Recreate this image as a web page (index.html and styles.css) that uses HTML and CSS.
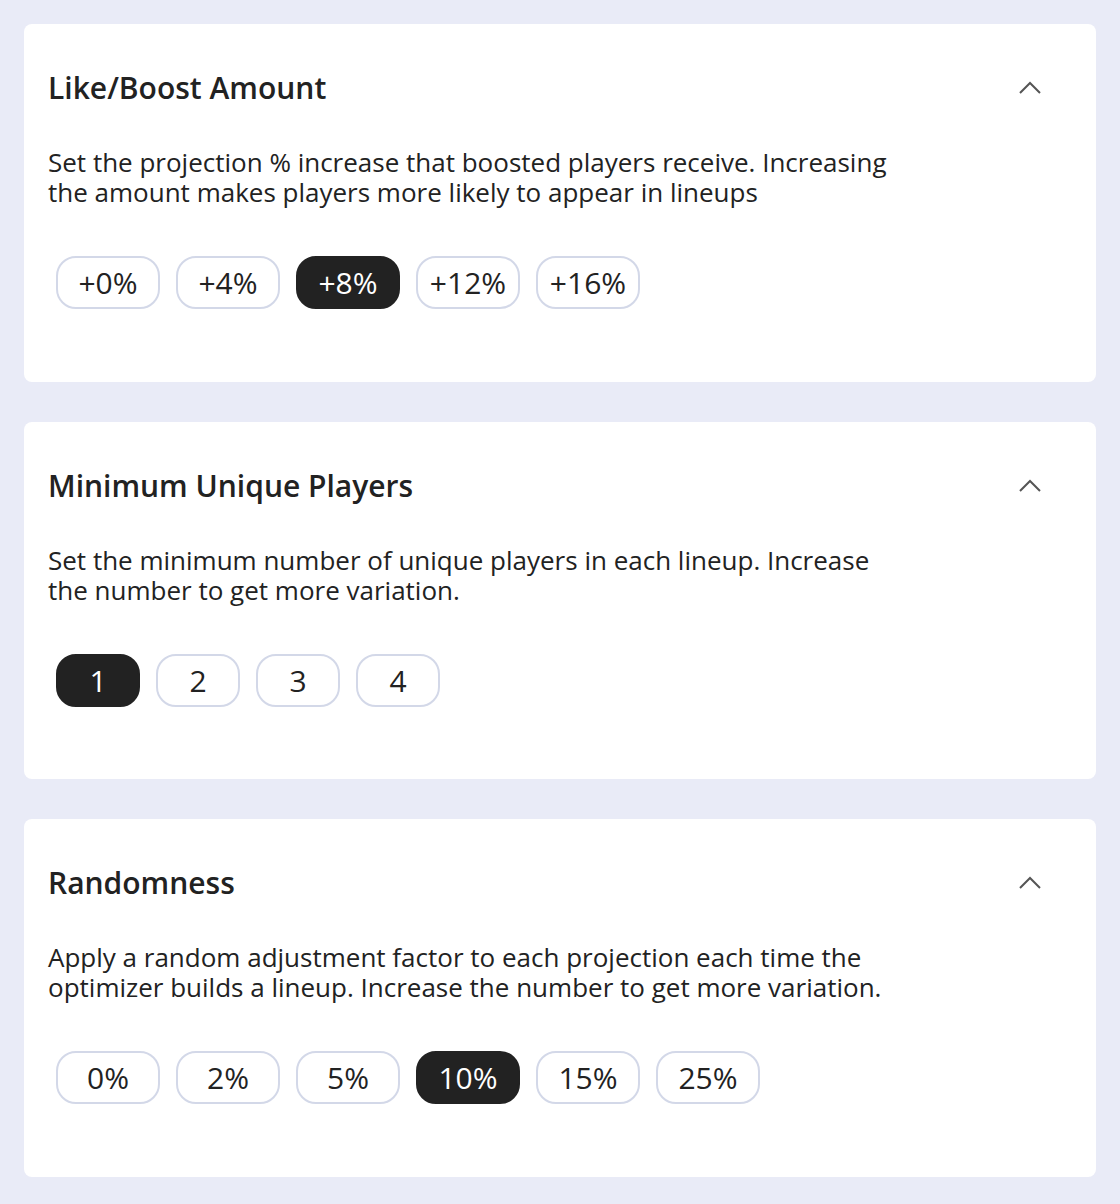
FILE: index.html
```html
<!DOCTYPE html>
<html lang="en">
<head>
<meta charset="utf-8">
<title>Optimizer settings</title>
<link rel="stylesheet" href="styles.css">
</head>
<body>
  <section class="card">
    <div class="card-header">
      <h2 class="card-title">Like/Boost Amount</h2>
      <svg class="chevron" width="24" height="14" viewBox="0 0 24 14"><path d="M2 12 L12 2 L22 12" fill="none" stroke="#555" stroke-width="2"/></svg>
    </div>
    <p class="card-desc">Set the projection % increase that boosted players receive. Increasing the amount makes players more likely to appear in lineups</p>
    <div class="options">
      <button class="opt wide">+0%</button>
      <button class="opt wide">+4%</button>
      <button class="opt wide active">+8%</button>
      <button class="opt wide">+12%</button>
      <button class="opt wide">+16%</button>
    </div>
  </section>

  <section class="card">
    <div class="card-header">
      <h2 class="card-title">Minimum Unique Players</h2>
      <svg class="chevron" width="24" height="14" viewBox="0 0 24 14"><path d="M2 12 L12 2 L22 12" fill="none" stroke="#555" stroke-width="2"/></svg>
    </div>
    <p class="card-desc">Set the minimum number of unique players in each lineup. Increase the number to get more variation.</p>
    <div class="options">
      <button class="opt narrow active">1</button>
      <button class="opt narrow">2</button>
      <button class="opt narrow">3</button>
      <button class="opt narrow">4</button>
    </div>
  </section>

  <section class="card">
    <div class="card-header">
      <h2 class="card-title">Randomness</h2>
      <svg class="chevron" width="24" height="14" viewBox="0 0 24 14"><path d="M2 12 L12 2 L22 12" fill="none" stroke="#555" stroke-width="2"/></svg>
    </div>
    <p class="card-desc">Apply a random adjustment factor to each projection each time the optimizer builds a lineup. Increase the number to get more variation.</p>
    <div class="options">
      <button class="opt wide">0%</button>
      <button class="opt wide">2%</button>
      <button class="opt wide">5%</button>
      <button class="opt wide active">10%</button>
      <button class="opt wide">15%</button>
      <button class="opt wide">25%</button>
    </div>
  </section>
</body>
</html>
```

FILE: styles.css
```css
* { box-sizing: border-box; }

html, body {
  margin: 0;
  background: #e9ebf7;
}

body {
  font-family: "Open Sans", "Noto Sans", sans-serif;
  color: #222;
  padding: 24px;
  display: flex;
  flex-direction: column;
  gap: 40px;
}

.card {
  background: #fff;
  border-radius: 8px;
  padding: 44px 24px 72px 24px;
  height: 357.6px;
}

.card-header {
  display: flex;
  align-items: center;
  justify-content: space-between;
  height: 40px;
  padding-right: 30px;
}

.card-title {
  margin: 0;
  font-size: 30px;
  font-weight: 600;
  line-height: 40px;
}

.chevron {
  display: block;
}

.card-desc {
  margin: 39px 0 0 0;
  font-size: 26px;
  line-height: 30px;
  max-width: 852px;
}

.options {
  display: flex;
  gap: 16px;
  margin: 49px 0 0 8px;
}

.opt {
  font-family: "Open Sans", "Noto Sans", sans-serif;
  font-size: 30px;
  color: #222;
  background: #fff;
  border: 2px solid #d3d8e8;
  border-radius: 20px;
  height: 53px;
  padding: 0;
  display: flex;
  align-items: center;
  justify-content: center;
}

.opt.wide { width: 104px; }
.opt.narrow { width: 84px; }

.opt.active {
  background: #222;
  border-color: #222;
  color: #fff;
}
```
